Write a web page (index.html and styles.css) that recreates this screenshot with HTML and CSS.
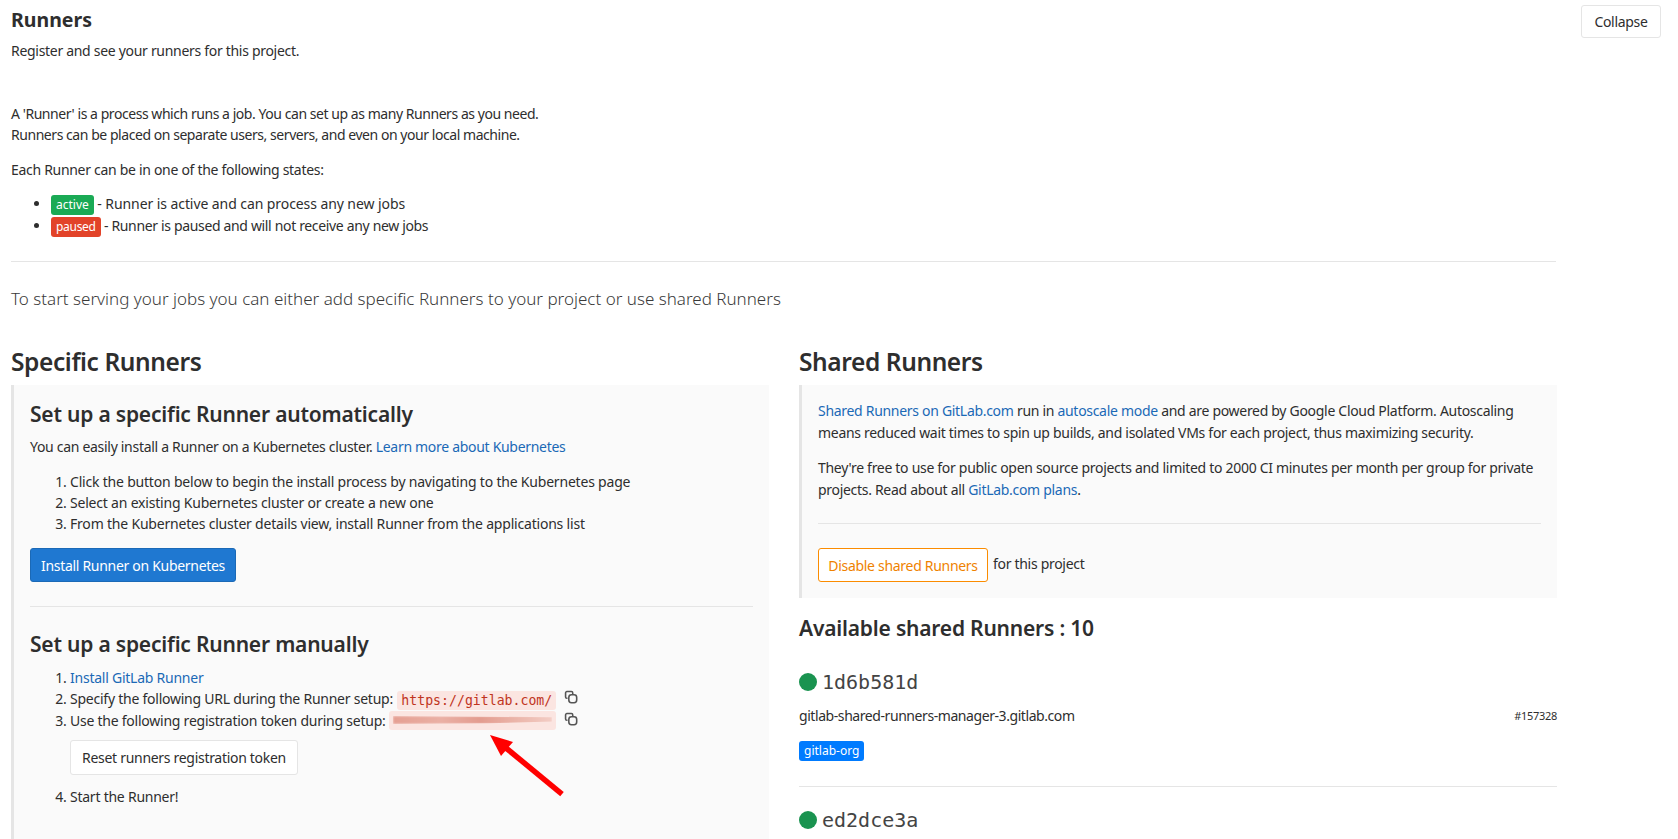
FILE: index.html
```html
<!DOCTYPE html>
<html lang="en">
<head>
<meta charset="utf-8">
<title>Runners</title>
<link rel="stylesheet" href="styles.css">
</head>
<body>
<div class="page">
  <header class="head">
    <div>
      <h4 class="title">Runners</h4>
      <p class="sub">Register and see your runners for this project.</p>
    </div>
    <button class="btn collapse">Collapse</button>
  </header>
  <div class="intro">
    <p class="p-two">A 'Runner' is a process which runs a job. You can set up as many Runners as you need.<br>Runners can be placed on separate users, servers, and even on your local machine.</p>
    <p class="p-each">Each Runner can be in one of the following states:</p>
    <ul class="states">
      <li class="st-a"><span class="badge green">active</span> - Runner is active and can process any new jobs</li>
      <li><span class="badge red">paused</span> - Runner is paused and will not receive any new jobs</li>
    </ul>
  </div>
  <hr class="rule">
  <p class="lead">To start serving your jobs you can either add specific Runners to your project or use shared Runners</p>
  <div class="cols">
    <section class="col">
      <h3 class="h3">Specific Runners</h3>
      <div class="well">
        <h4 class="h4">Set up a specific Runner automatically</h4>
        <p class="p-kube">You can easily install a Runner on a Kubernetes cluster. <a href="#">Learn more about Kubernetes</a></p>
        <ol class="steps">
          <li>Click the button below to begin the install process by navigating to the Kubernetes page</li>
          <li>Select an existing Kubernetes cluster or create a new one</li>
          <li>From the Kubernetes cluster details view, install Runner from the applications list</li>
        </ol>
        <button class="btn primary">Install Runner on Kubernetes</button>
        <hr class="rule inner">
        <h4 class="h4">Set up a specific Runner manually</h4>
        <ol class="steps manual">
          <li><a href="#">Install GitLab Runner</a></li>
          <li>Specify the following URL during the Runner setup: <code class="code">https://gitlab.com/</code><svg class="copy" viewBox="0 0 16 16"><path d="M6 1.8H3.3A1.5 1.5 0 0 0 1.8 3.3V8a1.5 1.5 0 0 0 1.5 1.5H4M6 1.8H8.5A1.5 1.5 0 0 1 10 3.3V4.5" fill="none"/><rect x="5.5" y="5.5" width="9" height="9" rx="3" fill="none"/></svg></li>
          <li>Use the following registration token during setup: <code class="code token"><span class="smear"></span></code><svg class="copy" viewBox="0 0 16 16"><path d="M6 1.8H3.3A1.5 1.5 0 0 0 1.8 3.3V8a1.5 1.5 0 0 0 1.5 1.5H4M6 1.8H8.5A1.5 1.5 0 0 1 10 3.3V4.5" fill="none"/><rect x="5.5" y="5.5" width="9" height="9" rx="3" fill="none"/></svg>
            <button class="btn reset">Reset runners registration token</button></li>
          <li>Start the Runner!</li>
        </ol>
      </div>
      <svg class="arrow" viewBox="0 0 90 70"><path d="M82 65 L26 19" stroke="#f00" stroke-width="5.5" fill="none"/><path d="M10 6 L33 13 L21 27 Z" fill="#f00"/></svg>
    </section>
    <section class="col">
      <h3 class="h3">Shared Runners</h3>
      <div class="well shared">
        <p class="p-a"><a href="#">Shared Runners on GitLab.com</a> run in <a href="#">autoscale mode</a> and are powered by Google Cloud Platform. Autoscaling means reduced wait times to spin up builds, and isolated VMs for each project, thus maximizing security.</p>
        <p class="p-b">They're free to use for public open source projects and limited to 2000 CI minutes per month per group for private projects. Read about all <a href="#">GitLab.com plans</a>.</p>
        <hr class="rule inner2">
        <div class="disable-row"><button class="btn warning">Disable shared Runners</button><span>for this project</span></div>
      </div>
      <h4 class="h4 avail">Available shared Runners : 10</h4>
      <div class="runner">
        <div class="r-id"><span class="dot"></span><span class="mono">1d6b581d</span></div>
        <div class="r-desc"><span>gitlab-shared-runners-manager-3.gitlab.com</span><small>#157328</small></div>
        <span class="tag">gitlab-org</span>
      </div>
      <hr class="rule r-rule">
      <div class="r-id"><span class="dot"></span><span class="mono">ed2dce3a</span></div>
    </section>
  </div>
</div>
</body>
</html>
```
FILE: styles.css
```css
* { box-sizing: border-box; }
html, body { margin: 0; height: 839px; overflow: hidden; background: #fff; }
body { font-family: "Noto Sans", "Open Sans", sans-serif; font-size: 14px; color: #2e2e2e; line-height: 21px; }
.page { width: 1678px; height: 839px; overflow: hidden; padding: 0 122px 0 11px; }
p { margin: 0; }
a { color: #1b69b6; text-decoration: none; }
.head { display: flex; justify-content: space-between; align-items: flex-start; margin-right: -105px; }
.title { margin: 0; padding-top: 6px; font-size: 19.5px; line-height: 27px; font-weight: 700; }
.sub { margin-top: 7px; letter-spacing: -0.3px; }
.btn { font: inherit; font-size: 14px; line-height: 19px; border-radius: 3px; border: 1px solid #e5e5e5; background: #fff; color: #2e2e2e; padding: 6px 11px; white-space: nowrap; }
.collapse { margin-top: 5px; width: 80px; height: 33px; letter-spacing: -0.3px; }
.p-two { margin-top: 42px; letter-spacing: -0.45px; }
.p-each { margin-top: 14px; letter-spacing: -0.3px; }
.states { margin: 13px 0 0; padding: 0 0 0 40px; letter-spacing: -0.34px; }
.st-a { letter-spacing: -0.08px; }
.badge { display: inline-block; color: #fff; font-size: 12px; line-height: 20px; padding: 0 5px; border-radius: 3px; height: 20px; letter-spacing: -0.3px; }
.green { background: #1aaa55; letter-spacing: 0; }
.red { background: #e24329; }
.rule { border: 0; border-top: 1px solid #e5e5e5; margin: 0; }
.intro + .rule { margin-top: 24px; }
.lead { margin-top: 25px; font-size: 17px; line-height: 24px; font-weight: 300; color: #3a3a3a; }
.cols { display: grid; grid-template-columns: 758px 758px; column-gap: 30px; margin-top: 35px; }
.col { position: relative; min-width: 0; }
.h3 { margin: 0; font-size: 24.5px; line-height: 32px; font-weight: 600; letter-spacing: -0.4px; }
.well { margin-top: 7px; background: #fafafa; border-left: 3px solid #e5e5e5; padding: 16px 16px 32px 16px; height: 470px; }
.well.shared { height: 213px; padding-top: 15px; line-height: 21.5px; }
.h4 { margin: 0; font-size: 21px; line-height: 27px; font-weight: 600; letter-spacing: -0.2px; }
.p-kube { margin-top: 8px; letter-spacing: -0.3px; }
.steps { margin: 14px 0 0; padding: 0 0 0 40px; letter-spacing: -0.2px; }
.primary { margin-top: 14px; background: #1f78d1; border-color: #1b69b6; color: #fff; width: 206px; height: 34px; padding: 0; letter-spacing: -0.3px; display: block; }
.inner { margin: 24px 0 24px; }
.manual { margin-top: 9px; letter-spacing: -0.24px; }
.code { display: inline-block; font-family: "DejaVu Sans Mono", monospace; font-size: 13.2px; line-height: 19px; height: 19px; letter-spacing: 0; background: #fbe5e1; color: #c0341d; padding: 0 4px; border-radius: 3px; vertical-align: -1px; margin-left: 1px; }
.token { width: 167px; padding: 5px 4px; vertical-align: -4px; margin-left: 0; }
.smear { display: block; height: 8px; background: linear-gradient(90deg, #e59f92, #eab0a5 30%, #e39c8f 55%, #ecb8ad 80%, #f3cdc5); clip-path: polygon(0 0, 100% 15%, 100% 70%, 60% 90%, 0 100%); filter: blur(0.8px); }
.copy { width: 14px; height: 14px; margin-left: 8px; stroke: #555; stroke-width: 1.8; vertical-align: 0; }
.reset { display: block; margin: 9px 0 11px; width: 228px; height: 35px; padding: 0; letter-spacing: -0.3px; }
.arrow { position: absolute; left: 469px; top: 383px; width: 90px; height: 70px; }
.p-a, .p-b { letter-spacing: -0.3px; }
.p-b { margin-top: 14px; }
.inner2 { margin: 23px 0 24px; }
.disable-row { display: flex; align-items: center; gap: 5px; letter-spacing: -0.3px; }
.disable-row span { position: relative; top: -1px; }
.warning { border-color: #fb8c00; color: #ef8200; width: 170px; height: 34px; padding: 0; letter-spacing: -0.3px; }
.avail { margin-top: 17px; }
.runner { margin-top: 28px; }
.r-id { display: flex; align-items: center; gap: 5px; height: 24px; }
.dot { width: 18px; height: 18px; border-radius: 50%; background: #1a9350; }
.mono { font-family: "DejaVu Sans Mono", monospace; font-size: 20px; color: #444; }
.r-desc { display: flex; justify-content: space-between; align-items: center; margin-top: 11px; letter-spacing: -0.43px; }
.r-desc small { font-size: 11px; letter-spacing: -0.3px; }
.tag { display: inline-block; margin-top: 15px; background: #007bff; color: #fff; font-size: 12px; line-height: 20px; height: 20px; padding: 0 5px; border-radius: 3px; }
.r-rule { margin: 25px 0 21px; }
```
